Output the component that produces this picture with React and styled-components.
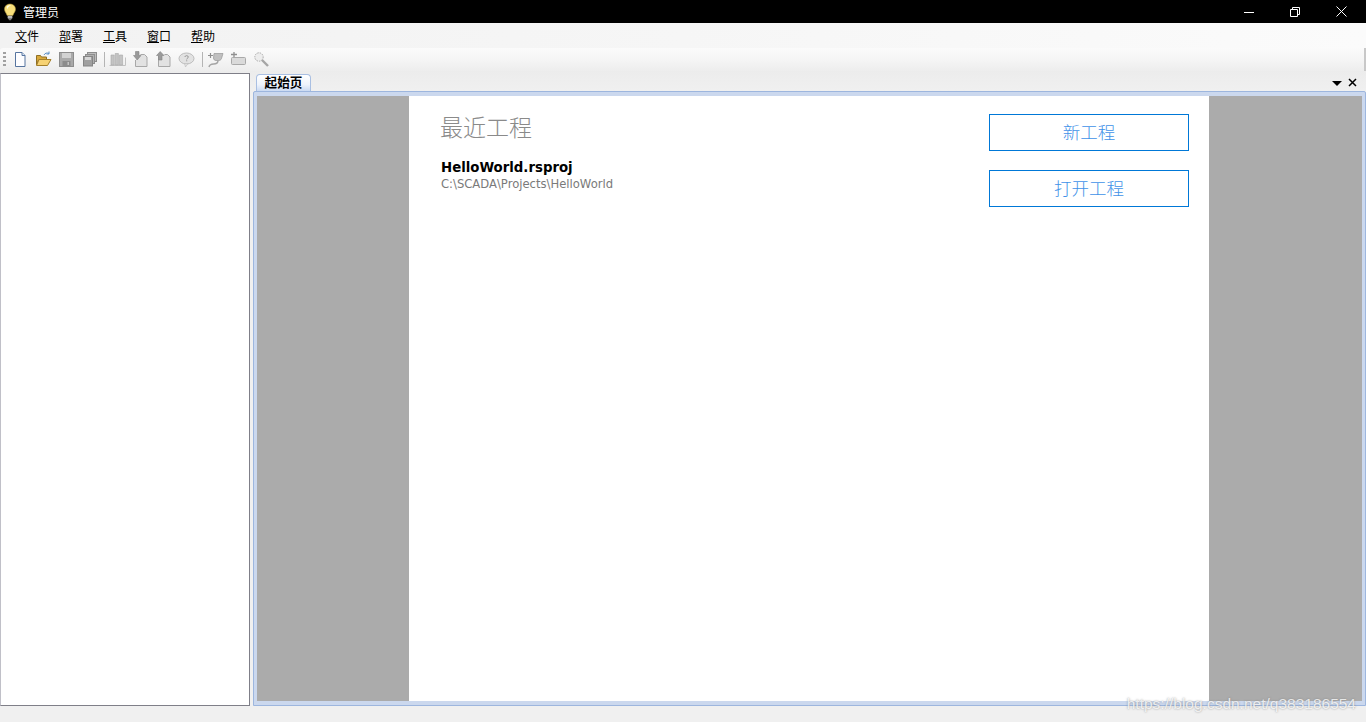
import styled, { createGlobalStyle } from "styled-components";

const GlobalStyle = createGlobalStyle`
  html, body {
    margin: 0;
    padding: 0;
    background: #f0f0f0;
  }
  * {
    box-sizing: border-box;
  }
`;

const CJK = `"Noto Sans CJK SC", "Liberation Sans", sans-serif`;

const MENU_ITEMS = ["文件", "部署", "工具", "窗口", "帮助"];

function BulbIcon() {
  return (
    <svg width="16" height="18" viewBox="0 0 16 18">
      <path d="M8 1C4.500 1 2.500 3.400 2.500 6.200c0 2.600 2 3.800 2.600 6.300h5.800c.6-2.500 2.600-3.700 2.600-6.300C13.500 3.400 11.500 1 8 1z" fill="#f7de7a" stroke="#a8903c" strokeWidth=".6" />
      <path d="M5 3.200C6 2.200 8 2 9 2.600 7.400 3 6 4.200 5.400 6 4.800 5.400 4.500 4 5 3.200z" fill="#fffbe2" />
      <rect x="5.600" y="12.800" width="4.800" height="3" rx="1" fill="#b9b9b9" />
      <rect x="6.600" y="15.800" width="2.800" height="1.400" rx=".7" fill="#777" />
    </svg>
  );
}

function MinimizeIcon() {
  return (
    <svg width="10" height="10" viewBox="0 0 10 10">
      <path d="M0 5.500h10" stroke="#fff" fill="none" />
    </svg>
  );
}

function RestoreIcon() {
  return (
    <svg width="10" height="10" viewBox="0 0 10 10">
      <path d="M.5 2.500h7v7h-7zM2.500 2.500v-2h7v7h-2" stroke="#fff" fill="none" />
    </svg>
  );
}

function CloseIcon() {
  return (
    <svg width="11" height="11" viewBox="0 0 11 11">
      <path d="M.5.5l10 10M10.500.5l-10 10" stroke="#fff" fill="none" />
    </svg>
  );
}

const TOOL_ICONS = {
  file: (
    <>
      <path d="M3.500 1.500h6.500l3 3v11h-9.500z" fill="#fdfdff" stroke="#56749f" />
      <path d="M10 1.500v3h3" fill="#dce6f4" stroke="#56749f" />
    </>
  ),
  open: (
    <>
      <path d="M1.500 4.500h4l1 1.500h5v3h-8l-2 5z" fill="#d9a93c" stroke="#8f6f24" />
      <path d="M1.500 14.500l2.500-6h12l-3.500 6z" fill="#f6d273" stroke="#a37f2a" />
      <path d="M9 4c1-2 3-2.500 5-1.500M14 .5v2.500h-2.500" fill="none" stroke="#5a8fc8" />
    </>
  ),
  save: (
    <>
      <rect x="1.500" y="1.500" width="14" height="14" fill="#a9a9a9" stroke="#8d8d8d" />
      <rect x="4" y="2" width="9" height="5" fill="#d2d2d2" />
      <rect x="4.500" y="10" width="8" height="5" fill="#8c8c8c" />
      <rect x="9.500" y="11" width="1.500" height="3" fill="#c4c4c4" />
    </>
  ),
  saveAll: (
    <>
      <rect x="6.500" y="1.500" width="9" height="9" fill="#bdbdbd" stroke="#8d8d8d" />
      <rect x="4.500" y="3.500" width="9" height="9" fill="#b0b0b0" stroke="#8d8d8d" />
      <rect x="2.500" y="5.500" width="9" height="9.500" fill="#a0a0a0" stroke="#858585" />
      <rect x="4" y="6" width="6" height="3" fill="#d6d6d6" />
    </>
  ),
  chart: (
    <>
      <path d="M.5 14.500h16v-8" fill="none" stroke="#c2c2c2" />
      <path d="M2 4h3.200v10H2zM6.200 2.500h3.200V14H6.200zM10.400 4h3.200v10h-3.200z" fill="#c4c4c4" stroke="#a8a8a8" strokeWidth=".6" />
    </>
  ),
  down: (
    <>
      <path d="M8.500 3.500h4l2.500 2.500v9.500H3.500V9" fill="#e2e2e2" stroke="#a8a8a8" />
      <path d="M3.500 .5h3.500v4h2L5.200 9 1.500 4.500h2z" fill="#9a9a9a" stroke="#858585" strokeWidth=".6" />
    </>
  ),
  up: (
    <>
      <path d="M9.500 3.500h3l2.500 2.500v9.500H3.500V5" fill="#e2e2e2" stroke="#a8a8a8" />
      <path d="M3.500 9V4.500h-2L5.200 .5 9 4.500H7V9z" fill="#9a9a9a" stroke="#858585" strokeWidth=".6" />
    </>
  ),
  help: (
    <>
      <ellipse cx="8.500" cy="7.500" rx="7.500" ry="5.500" fill="#e2e2e2" stroke="#bcbcbc" />
      <path d="M6.500 12.500l1 3.500 2.500-3.500z" fill="#e2e2e2" stroke="#bcbcbc" strokeWidth=".6" />
      <path d="M6.800 6c.3-1.800 3.500-1.800 3.500 0 0 1.200-1.600 1.200-1.600 2.400M8.700 9.300v1" fill="none" stroke="#969696" />
    </>
  ),
  plug: (
    <>
      <path d="M7 2.500h9l-1.500 5c-.4 1.400-1.500 2-3 2H9C7.500 9.500 6.500 8.500 6.500 7z" fill="#c0c0c0" stroke="#969696" strokeWidth=".7" />
      <path d="M11 9.500c0 3-2 3.500-4.500 3.500S2.500 14 2 16" fill="none" stroke="#a5a5a5" strokeWidth="1.500" />
      <path d="M1 4.500h5M3.500 2v5" stroke="#8f8f8f" strokeWidth="1.200" />
    </>
  ),
  plus: (
    <>
      <rect x="1.500" y="6.500" width="14" height="7" rx="1" fill="#dadada" stroke="#a9a9a9" />
      <path d="M1 3.500h6M4 1v5" stroke="#8f8f8f" strokeWidth="1.300" />
    </>
  ),
  search: (
    <>
      <circle cx="6" cy="6" r="4.200" fill="#ededed" stroke="#aaa" strokeDasharray="1.500 1" />
      <path d="M9 9l6 6" stroke="#a5a5a5" strokeWidth="2.400" />
    </>
  ),
};

function ToolIcon({ name }) {
  return (
    <svg width="17" height="17" viewBox="0 0 17 17">
      {TOOL_ICONS[name]}
    </svg>
  );
}

export default function App() {
  return (
    <Page>
      <GlobalStyle />
      <TitleBar>
        <TitleLeft>
          <BulbIcon />
          <TitleText>管理员</TitleText>
        </TitleLeft>
        <WindowButtons>
          <WindowButton><MinimizeIcon /></WindowButton>
          <WindowButton><RestoreIcon /></WindowButton>
          <WindowButton><CloseIcon /></WindowButton>
        </WindowButtons>
      </TitleBar>

      <MenuBar>
        {MENU_ITEMS.map((item) => (
          <MenuItem key={item}>
            <u>{item[0]}</u>
            {item[1]}
          </MenuItem>
        ))}
      </MenuBar>

      <ToolBar>
        <Grip />
        <ToolGroup>
          <ToolIcon name="file" />
          <ToolIcon name="open" />
          <ToolIcon name="save" />
          <ToolIcon name="saveAll" />
        </ToolGroup>
        <ToolSeparator />
        <ToolGroup>
          <ToolIcon name="chart" />
          <ToolIcon name="down" />
          <ToolIcon name="up" />
          <ToolIcon name="help" />
        </ToolGroup>
        <ToolSeparator $last />
        <ToolGroup>
          <ToolIcon name="plug" />
          <ToolIcon name="plus" />
          <ToolIcon name="search" />
        </ToolGroup>
      </ToolBar>

      <Workspace>
        <SidePanel />
        <DocArea>
          <TabStrip>
            <Tab>起始页</Tab>
            <TabActions>
              <svg width="10" height="10" viewBox="0 0 10 10">
                <path d="M0 3h10L5 8z" fill="#000" />
              </svg>
              <svg width="9" height="9" viewBox="0 0 9 9">
                <path d="M1 1l7 7M8 1L1 8" stroke="#000" strokeWidth="1.500" fill="none" />
              </svg>
            </TabActions>
          </TabStrip>
          <DocFrame>
            <GreyBack>
              <StartPage>
                <RecentColumn>
                  <RecentTitle>最近工程</RecentTitle>
                  <ProjectName>HelloWorld.rsproj</ProjectName>
                  <ProjectPath>C:\SCADA\Projects\HelloWorld</ProjectPath>
                </RecentColumn>
                <ActionColumn>
                  <ActionButton>新工程</ActionButton>
                  <ActionButton>打开工程</ActionButton>
                </ActionColumn>
              </StartPage>
            </GreyBack>
          </DocFrame>
        </DocArea>
      </Workspace>

      <Watermark>https://blog.csdn.net/q383186554</Watermark>
    </Page>
  );
}

const Page = styled.div`
  position: relative;
  width: 1366px;
  height: 722px;
  overflow: hidden;
  display: flex;
  flex-direction: column;
  background: #f0f0f0;
  font-family: ${CJK};
`;

const TitleBar = styled.div`
  height: 23px;
  background: #000;
  display: flex;
  align-items: center;
  justify-content: space-between;
  flex-shrink: 0;
`;

const TitleLeft = styled.div`
  display: flex;
  align-items: center;
  padding-left: 2px;
  gap: 5px;
`;

const TitleText = styled.span`
  color: #fff;
  font-size: 12px;
  line-height: 23px;
`;

const WindowButtons = styled.div`
  display: flex;
  padding-right: 2px;
`;

const WindowButton = styled.div`
  width: 46px;
  height: 21px;
  display: flex;
  align-items: center;
  justify-content: center;
`;

const MenuBar = styled.div`
  height: 25px;
  flex-shrink: 0;
  display: flex;
  align-items: center;
  padding-left: 5px;
  background: linear-gradient(90deg, #f2f2f2 0%, #f6f6f6 50%, #fbfbfb 100%);
`;

const MenuItem = styled.span`
  width: 44px;
  text-align: center;
  font-size: 12px;
  color: #000;
`;

const ToolBar = styled.div`
  height: 23px;
  flex-shrink: 0;
  display: flex;
  align-items: center;
  padding-left: 3px;
  border-top-left-radius: 3px;
  border-right: 2px solid #c8c8c8;
  background: linear-gradient(180deg, #fbfbfb 0%, #f5f5f5 50%, #ededed 100%);
`;

const Grip = styled.div`
  width: 3px;
  height: 15px;
  margin-right: 6px;
  background: repeating-linear-gradient(180deg, #a0a0a0 0 2px, transparent 2px 4px);
`;

const ToolGroup = styled.div`
  display: flex;
  align-items: center;
  gap: 6px;
`;

const ToolSeparator = styled.div`
  width: 1px;
  height: 15px;
  margin: 0 4px 0 ${({ $last }) => ($last ? "7px" : "6px")};
  background: #b4b4b4;
`;

const Workspace = styled.div`
  flex: 1;
  display: flex;
  padding: 2px 0 16px 0;
  background: linear-gradient(180deg, #ececec 0, #f0f0f0 20px);
  min-height: 0;
`;

const SidePanel = styled.div`
  width: 250px;
  background: #fff;
  border: 1px solid #7f7f88;
  border-left-color: #c0c0c8;
`;

const DocArea = styled.div`
  flex: 1;
  min-width: 0;
  display: flex;
  flex-direction: column;
  margin-left: 3px;
`;

const TabStrip = styled.div`
  height: 18px;
  flex-shrink: 0;
  display: flex;
  align-items: flex-end;
  justify-content: space-between;
  padding-left: 3px;
`;

const Tab = styled.div`
  width: 55px;
  height: 17px;
  text-align: center;
  font-size: 12.600px;
  font-weight: 700;
  line-height: 13px;
  color: #000;
  border: 1px solid #a9bfe2;
  border-bottom: none;
  border-radius: 4px 4px 0 0;
  background: linear-gradient(180deg, #ffffff 0%, #eef3fb 60%, #cbdaf2 100%);
`;

const TabActions = styled.div`
  display: flex;
  align-items: center;
  gap: 6px;
  height: 17px;
  padding-right: 9px;
`;

const DocFrame = styled.div`
  flex: 1;
  min-height: 0;
  display: flex;
  background: #cbd8ee;
  border: 1px solid #9db6de;
  border-radius: 2px 2px 0 0;
  padding: 4px 3px 4px 3px;
`;

const GreyBack = styled.div`
  flex: 1;
  display: flex;
  justify-content: center;
  background: #ababab;
  padding-right: 1px;
`;

const StartPage = styled.div`
  width: 800px;
  background: #fff;
  display: flex;
  justify-content: space-between;
  padding: 15px 20px 0 31px;
`;

const RecentColumn = styled.div`
  display: flex;
  flex-direction: column;
`;

const RecentTitle = styled.div`
  font-size: 23px;
  line-height: 30px;
  color: #8a8a8a;
  font-weight: 300;
  margin-bottom: 19px;
`;

const ProjectName = styled.div`
  font-family: "DejaVu Sans", sans-serif;
  font-size: 13.300px;
  font-weight: 700;
  line-height: 16px;
  margin-left: 1px;
  color: #000;
`;

const ProjectPath = styled.div`
  font-family: "DejaVu Sans", sans-serif;
  font-size: 11.600px;
  line-height: 14px;
  margin: 1px 0 0 1px;
  color: #7a7a7a;
`;

const ActionColumn = styled.div`
  display: flex;
  flex-direction: column;
  gap: 19px;
  padding-top: 3px;
`;

const ActionButton = styled.div`
  width: 200px;
  height: 37px;
  border: 1px solid #0078d7;
  display: flex;
  align-items: center;
  justify-content: center;
  padding-bottom: 2px;
  font-size: 17.500px;
  font-weight: 300;
  color: #3f92e8;
  background: #fff;
`;

const Watermark = styled.div`
  position: absolute;
  right: 10px;
  bottom: 9px;
  font-family: "Liberation Sans", Arial, sans-serif;
  font-size: 15.500px;
  color: rgba(255, 255, 255, 0.8);
  text-shadow: 0 0 2px rgba(120, 120, 120, 0.8);
`;
